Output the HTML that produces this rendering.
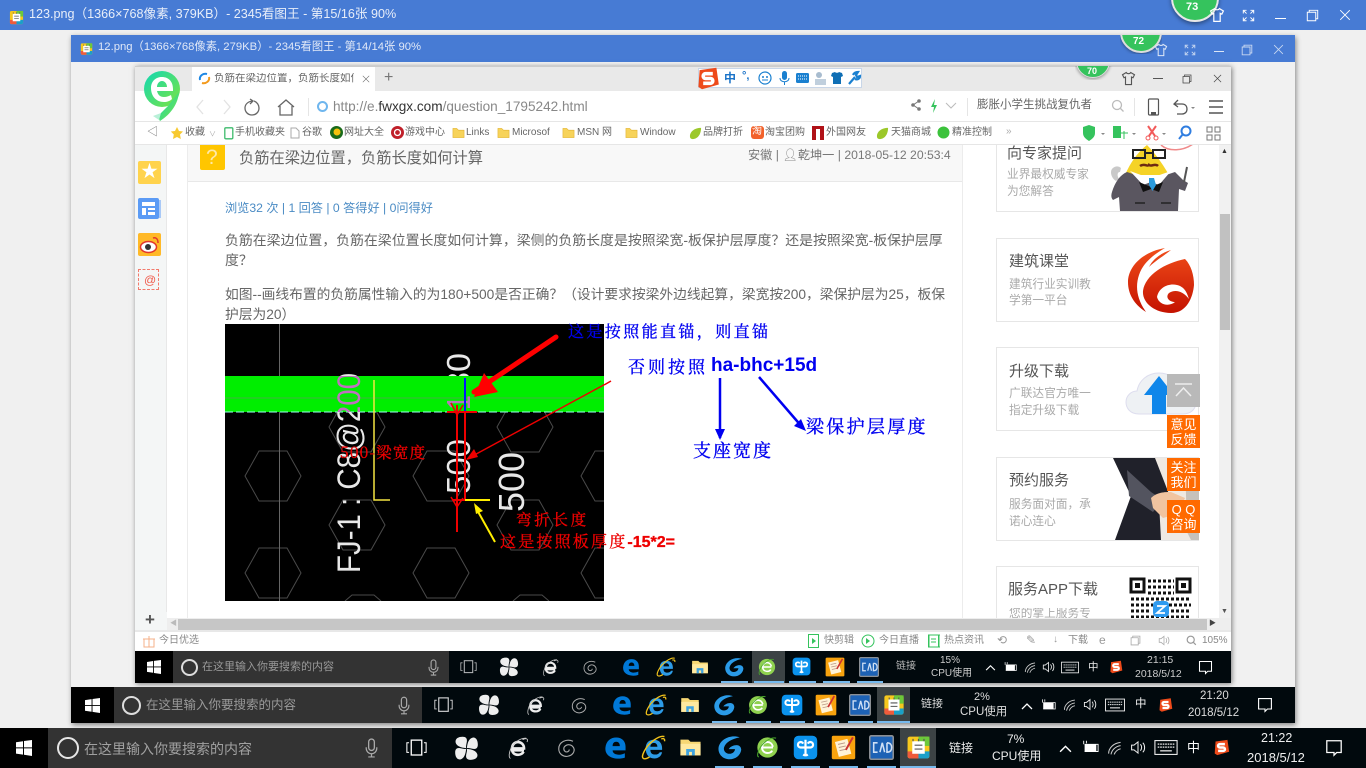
<!DOCTYPE html>
<html lang="zh-CN"><head><meta charset="utf-8"><title>123.png</title>
<style>
html,body{margin:0;padding:0;width:1366px;height:768px;overflow:hidden;background:#f0f0f0}
body{position:relative;font-family:"Liberation Sans","Noto Sans CJK SC",sans-serif;color:#666;filter:blur(.3px)}
div,span,svg{position:absolute}
.t{white-space:nowrap;line-height:1}
.bar{background:#477bd4}
.tb{background:#01090d;overflow:hidden}
.ic{width:28px;height:28px}
.card{position:absolute;left:996px;width:203px;border:1px solid #e6e6e6;background:#fff;box-sizing:border-box}
.side{left:1167px;width:33px;background:#ff6a00;color:#fff;text-align:center;font-size:13px;line-height:15px;height:33px;padding-top:2px;box-sizing:border-box}
.h{font-size:15px;color:#555}
.g{font-size:11.700px;color:#aaa}
.bm{font-size:10px;color:#666;top:128px}
.st{font-size:10px;color:#888;top:636px}
.b{color:#0000f0;font-family:"Noto Serif CJK SC","Liberation Serif",serif;font-weight:400;-webkit-text-stroke:.35px currentColor}
</style></head><body>

<svg width="0" height="0" style="left:0;top:0">
<defs>
<symbol id="win" viewBox="0 0 16 16"><path fill="#fff" d="M0 2.300 7 1.200V7.400H0ZM8 1 16 0V7.400H8ZM0 8.400H7V14.600L0 13.600ZM8 8.400H16V16L8 14.800Z"/></symbol>
<symbol id="mic" viewBox="0 0 16 24"><rect x="4.500" y="1" width="7" height="14" rx="3.500" fill="none" stroke="#aaa" stroke-width="1.600"/><path d="M1.500 11v1.500a6.500 6.500 0 0 0 13 0V11M8 19v4M4 23h8" fill="none" stroke="#aaa" stroke-width="1.500"/></symbol>
<symbol id="tv" viewBox="0 0 24 20"><rect x="6" y="1" width="12" height="17" fill="none" stroke="#fff" stroke-width="1.500"/><path d="M3.500 4H1v11h2.500M20.500 4H23v11h-2.500" fill="none" stroke="#fff" stroke-width="1.200"/></symbol>
<symbol id="pin" viewBox="0 0 32 32"><g fill="#eee"><path id="bl1" d="M15.500 15.500C9 15 3 13 2 8 1.500 3 6 1 11 1c4 0 6 2 5.500 6-.5 3-1.500 6-1 8.500Z"/><path d="M16.500 15.500C17 9 19 3 24 2c4.500-.5 6.500 4 6.500 9 0 4-2 6-6 5.500-3-.5-5.500-1.500-8-1Z"/><path d="M16.500 16.500C23 17 29 19 30 24c.5 4.500-4 6.500-9 6.500-4 0-6-2-5.500-6 .5-3 1.500-5.500 1-8Z"/><path d="M15.500 16.500C15 23 13 29 8 30c-4.500.5-6.500-4-6.500-9 0-4 2-6 6-5.500 3 .5 5.500 1.500 8 1Z"/></g></symbol>
<symbol id="iew" viewBox="0 0 32 32"><path fill="none" stroke="#eee" stroke-width="3.500" d="M24 19H9.500M9 16.500H24C24 11 20 8 16 8 11 8 8 12 8 17c0 5 3 8 8 8 3.500 0 6-1.500 7.500-4"/><path fill="none" stroke="#ccc" stroke-width="1.200" d="M27 3C20 2 8 9 5 21c-1 4-1 8 1 9M22 5c5-3 8-1 6 3"/></symbol>
<symbol id="spi" viewBox="0 0 32 32"><path fill="none" stroke="#aaa" stroke-width="1.500" d="M24 7C15 3 5 8 5 17c0 7 6 11 12 10 6-1 10-6 8-11-2-4-7-6-11-3-3 2-3 6 0 8 3 1 5-1 5-3"/></symbol>
<symbol id="edge" viewBox="0 0 32 32"><path fill="#0078d7" d="M2 16C3 7 9 2 17 2c8 0 13 5 13 13v5H12c0 4 4 6 9 6 3 0 6-1 8-2v6c-3 1-6 1.500-9 1.500C9 31.500 1 26 2 16Zm10-2h10c0-4-2-6-5-6s-5 2-5 6Z"/></symbol>
<symbol id="ie" viewBox="0 0 32 32"><path fill="#2d9be6" d="M6 17C6 10 10 6 16.500 6 23 6 27 10 27 17v2H12c0 4 2 6 6 6 3 0 5-1 6-3h3c-1 5-5 8-10 8-7 0-11-5-11-13Zm6-2h9c0-3-2-5-4.500-5S12 12 12 15Z"/><path fill="none" stroke="#f2c21a" stroke-width="1.800" d="M30 2C24 0 10 9 4 21c-2 4-3 8-1 9 2 1 5 0 8-2M26 5c3-1 5 0 4 3"/></symbol>
<symbol id="fold" viewBox="0 0 32 32"><path fill="#f7d774" d="M2 5h11l3 3h14v19H2Z"/><path fill="#ffe9a0" d="M2 11h28v16H2Z"/><path fill="#3fa3e0" d="M10 27v-9h12v9h-4v-5h-4v5Z"/></symbol>
<symbol id="g" viewBox="0 0 32 32"><path fill="#2a9be8" d="M29 3C18-1 4 5 2 16c-1 8 5 15 14 15 8 0 14-5 15-12 0-3-2-6-6-6-4 0-8 2-10 5h8c0 3-3 6-7 6-5 0-8-4-7-8 2-7 10-11 20-13Z"/></symbol>
<symbol id="ge" viewBox="0 0 32 32"><circle cx="16" cy="16" r="13" fill="#8fd14f"/><path fill="none" stroke="#fff" stroke-width="2.500" d="M9 16h14M23 15c-1-4-4-6-7-6-4 0-7 3-7 7s3 7 7 7c3 0 5-1 6-3"/><path fill="none" stroke="#4aa82c" stroke-width="1.300" d="M27 4C20 2 8 10 4 22c-1 3-1 6 1 6"/></symbol>
<symbol id="bl" viewBox="0 0 32 32"><rect x="1" y="1" width="30" height="30" rx="6" fill="#0b93ee"/><path fill="none" stroke="#fff" stroke-width="2.800" d="M16 6v20M16 16H10a3.500 3.500 0 1 1 3-5M16 16h6a3.500 3.500 0 1 0-3-5M13 25c1.500 1 3 1 3 1s1.500 0 3-1"/></symbol>
<symbol id="no" viewBox="0 0 32 32"><rect x="1" y="1" width="30" height="30" rx="2" fill="#f8a30e"/><path fill="#fff3d8" d="M5 9 21 5 26 24 10 28Z"/><path stroke="#b98" stroke-width="1.200" d="M9 12l9-2M10 16l9-2M11 20l9-2"/><path stroke="#c33" stroke-width="2.500" d="M28 3 19 19"/></symbol>
<symbol id="cad" viewBox="0 0 32 32"><rect x="1" y="1" width="30" height="30" rx="2" fill="#1d62b5" stroke="#8b8f94" stroke-width="2"/><path fill="none" stroke="#cfe0f5" stroke-width="2" d="M11 10H6v12h5M14 22l3-12 3 12M23 10v12c5 0 6-3 6-6s-1-6-6-6"/></symbol>
<symbol id="kw" viewBox="0 0 32 32"><rect x="2" y="2" width="28" height="28" rx="3" fill="#f6c81d"/><path fill="#6cc93a" d="M16 2h14v12H16Z"/><path fill="#ef5b3c" d="M2 21h14v9H5a3 3 0 0 1-3-3Z"/><path fill="#1aa0c8" d="M16 21h14v6a3 3 0 0 1-3 3H16Z"/><rect x="8" y="8" width="16" height="16" fill="#fff"/><path stroke="#555" stroke-width="1.500" fill="none" d="M9 8V5M16 8V5M23 8V5M11 13h10M11 18h10"/></symbol>
<symbol id="s" viewBox="0 0 20 20"><path fill="#ee4a1a" d="M3 3 17 1l2 14-14 4L2 17Z"/><path fill="none" stroke="#fff" stroke-width="3" d="M14 6H8a2 2 0 0 0 0 4h4a2 2 0 0 1 0 4H6"/></symbol>
<symbol id="up" viewBox="0 0 12 8"><path fill="none" stroke="#fff" stroke-width="1.300" d="M1 7 6 2l5 5"/></symbol>
<symbol id="bat" viewBox="0 0 20 16"><path fill="#fff" d="M4 5h13v8H4Z"/><path fill="none" stroke="#fff" d="M4 5h15v8H4M3 1v4M6 1v3"/></symbol>
<symbol id="wf" viewBox="0 0 20 18"><path fill="none" stroke="#ccc" stroke-width="1.300" d="M2 16c0-7 6-13 15-14M5 17c1-5 5-10 12-11M9 17c1-3 4-6 8-7"/></symbol>
<symbol id="vol" viewBox="0 0 20 18"><path fill="none" stroke="#eee" stroke-width="1.300" d="M2 6h3l5-4v14l-5-4H2ZM13 5c2 2 2 6 0 8M16 3c3 3 3 9 0 12"/></symbol>
<symbol id="kb" viewBox="0 0 28 18"><rect x=".7" y=".7" width="26.600" height="16.600" fill="none" stroke="#eee" stroke-width="1.300"/><path stroke="#eee" stroke-dasharray="2 1" stroke-width="1.500" d="M4 5h20M4 8.500h20"/><path stroke="#eee" stroke-width="1.500" d="M7 13h14"/></symbol>
<symbol id="nf" viewBox="0 0 20 20"><path fill="none" stroke="#fff" stroke-width="1.400" d="M2 2h16v13h-5l-3 3v-3H2Z"/></symbol>
<symbol id="shirt" viewBox="0 0 20 20"><path fill="none" stroke="currentColor" stroke-width="1.500" d="M7 2 2 5l2 4 2-1v10h8V8l2 1 2-4-5-3c-1 2-5 2-6 0Z"/></symbol>
<symbol id="fs" viewBox="0 0 20 20"><path fill="none" stroke="currentColor" stroke-width="1.500" d="M2 7V2h5M13 2h5v5M18 13v5h-5M7 18H2v-5M3 3l4 4M17 3l-4 4M17 17l-4-4M3 17l4-4"/></symbol>
<symbol id="rs" viewBox="0 0 20 20"><path fill="none" stroke="currentColor" stroke-width="1.500" d="M2 5h13v13H2ZM5 5V2h13v13h-3"/></symbol>
<symbol id="x" viewBox="0 0 20 20"><path fill="none" stroke="currentColor" stroke-width="1.500" d="M2 2l16 16M18 2 2 18"/></symbol>
<symbol id="fld" viewBox="0 0 14 12"><path fill="#f7d35a" stroke="#e0b030" stroke-width=".6" d="M1 1h4l2 2h6v8H1Z"/></symbol>
<symbol id="leaf" viewBox="0 0 14 14"><path fill="#9cc82a" d="M13 1C6 1 1 5 1 10c0 2 1 3 3 3 6 0 9-6 9-12Z"/></symbol>
<clipPath id="gr"><rect x="225" y="376" width="379" height="36"/></clipPath>
<clipPath id="ngr"><path d="M225 324H604V376H225ZM225 412H604V601H225Z"/></clipPath>
<linearGradient id="r" x1="0" y1="0" x2="0" y2="1"><stop offset="0" stop-color="#f04d1a"/><stop offset="1" stop-color="#c41200"/></linearGradient>
<linearGradient id="lg" x1="0" y1="0" x2="1" y2="1"><stop offset="0" stop-color="#10d8b4"/><stop offset="1" stop-color="#7fe43e"/></linearGradient>
</defs></svg>

<!-- window 1 title -->
<div class="bar" style="left:0;top:0;width:1366px;height:30px"></div>
<svg style="left:9px;top:8px" width="15" height="19"><use href="#kw" width="15" height="19"/></svg>
<span class="t" style="left:29px;top:8px;font-size:12.600px;color:#e8eef9">123.png（1366×768像素, 379KB）- 2345看图王 - 第15/16张 90%</span>
<div style="left:1171px;top:-26px;width:44px;height:44px;border-radius:50%;background:#35c35d;border:2px solid #e8e8e8;box-shadow:0 2px 4px rgba(0,0,0,.4)"></div>
<span class="t" style="left:1186px;top:2px;font-size:11px;font-weight:700;color:#fff">73</span>
<svg style="left:1209px;top:7px;color:#fff" width="16" height="16"><use href="#shirt" width="16" height="16"/></svg>
<svg style="left:1242px;top:9px;color:#fff" width="13" height="13"><use href="#fs" width="13" height="13"/></svg>
<div style="left:1275px;top:18px;width:11px;height:1px;background:#fff"></div>
<svg style="left:1306px;top:9px;color:#fff" width="13" height="13"><use href="#rs" width="13" height="13"/></svg>
<svg style="left:1339px;top:9px;color:#fff" width="12" height="12"><use href="#x" width="12" height="12"/></svg>

<!-- window 2 -->
<div style="left:71px;top:35px;width:1224px;height:688px;background:#f1f1f1;box-shadow:1px 2px 5px rgba(0,0,0,.45)"></div>
<div class="bar" style="left:71px;top:35px;width:1224px;height:27px"></div>
<svg style="left:80px;top:41px" width="13" height="16"><use href="#kw" width="13" height="16"/></svg>
<span class="t" style="left:98px;top:42px;font-size:11.300px;color:#e0e8f7">12.png（1366×768像素, 279KB）- 2345看图王 - 第14/14张 90%</span>
<div style="left:1120px;top:35px;width:42px;height:19px;overflow:hidden"><div style="left:0;top:-24px;width:38px;height:38px;border-radius:50%;background:#35c35d;border:2px solid #ddd;box-shadow:0 1px 3px rgba(0,0,0,.4)"></div></div>
<span class="t" style="left:1133px;top:37px;font-size:10px;font-weight:700;color:#fff">72</span>
<svg style="left:1154px;top:43px;color:#dce6f6" width="14" height="14"><use href="#shirt" width="14" height="14"/></svg>
<svg style="left:1184px;top:44px;color:#c9d8f1" width="12" height="12"><use href="#fs" width="12" height="12"/></svg>
<div style="left:1214px;top:51px;width:10px;height:1px;background:#dce6f6"></div>
<svg style="left:1241px;top:44px;color:#c9d8f1" width="12" height="12"><use href="#rs" width="12" height="12"/></svg>
<svg style="left:1273px;top:44px;color:#c9d8f1" width="11" height="11"><use href="#x" width="11" height="11"/></svg>

<!-- browser -->
<div style="left:135px;top:66px;width:1096px;height:617px;background:#fff;box-shadow:1px 1px 5px rgba(0,0,0,.5)"></div>
<div style="left:135px;top:66px;width:1096px;height:25px;background:#e9e9e9;border-top:1px solid #ccc;box-sizing:border-box"></div>
<div style="left:192px;top:67px;width:183px;height:24px;background:#fff"></div>
<svg style="left:143px;top:70px" width="38" height="52" viewBox="0 0 38 52"><circle cx="19" cy="19" r="18" fill="url(#lg)"/><path fill="url(#lg)" d="M36 22c-1 12-8 22-19 29 0 0-2-3-1-6l9-9Z"/><path fill="#fff" d="M8 18c0-7 5-11 11-11s11 4 11 12v2H14c1 4 3 6 7 6 3 0 5-1 7-2l1 4c-2 2-5 3-8 3-8 0-13-6-13-14Zm6-1h10c0-3-2-6-5-6s-5 3-5 6Z"/><path fill="#b9f0d8" d="M10 46l8-3-2 7Z"/></svg>
<svg style="left:198px;top:72px" width="13" height="13" viewBox="0 0 13 13"><path fill="none" stroke="#1e88e5" stroke-width="2" d="M2 8C1 4 5 1 9 2"/><path fill="none" stroke="#f39a1d" stroke-width="2" d="M11 5c1 4-3 7-7 6"/></svg>
<span class="t" style="left:214px;top:73px;font-size:10.500px;color:#666;width:140px;overflow:hidden">负筋在梁边位置，负筋长度如何计算</span>
<svg style="left:362px;top:75px;color:#666" width="8" height="8"><use href="#x" width="8" height="8"/></svg>
<span class="t" style="left:384px;top:70px;font-size:16px;color:#777;font-weight:400">+</span>

<!-- sogou IME -->
<div style="left:698px;top:68px;width:164px;height:20px;border:1px solid #c8d6e8;background:#fff;box-sizing:border-box"></div>
<svg style="left:696px;top:66px" width="24" height="25"><use href="#s" width="24" height="25"/></svg>
<span class="t" style="left:724px;top:72px;font-size:12px;font-weight:700;color:#1a73c8">中</span>
<span class="t" style="left:742px;top:71px;font-size:11px;font-weight:700;color:#1a73c8">°,</span>
<svg style="left:758px;top:70px" width="108" height="16" viewBox="0 0 108 16"><circle cx="7" cy="8" r="6" fill="none" stroke="#1a80d0" stroke-width="1.200"/><circle cx="5" cy="7" r="1" fill="#1a80d0"/><circle cx="9" cy="7" r="1" fill="#1a80d0"/><path d="M4 10h6" stroke="#1a80d0"/><rect x="24" y="1" width="5" height="9" rx="2.500" fill="#1a80d0"/><path d="M22 8c0 5 9 5 9 0M26.500 12v3" stroke="#1a80d0" fill="none"/><rect x="38" y="3" width="13" height="10" rx="1.500" fill="#1a80d0"/><path d="M40 6h9M40 9h9" stroke="#fff" stroke-dasharray="1 1"/><circle cx="61" cy="5" r="3" fill="#a8bccf"/><rect x="57" y="9" width="11" height="6" fill="#c0cfdd"/><path fill="#0f6fb5" d="M74 3l3-1c1 1 3 1 4 0l3 1 1 3-2 1v7h-8V7l-2-1Z"/><path fill="none" stroke="#1a80d0" stroke-width="2.200" d="M91 14l6-7M95 5c1-2 3-3 5-3l-2 3 1 2 3-1c0 3-3 4-5 3"/></svg>

<div style="left:1075px;top:66px;width:38px;height:14px;overflow:hidden"><div style="left:1px;top:-22px;width:32px;height:32px;border-radius:50%;background:#35c35d;border:1px solid #ddd;box-shadow:0 1px 3px rgba(0,0,0,.4)"></div></div>
<span class="t" style="left:1087px;top:67px;font-size:9px;font-weight:700;color:#fff">70</span>
<svg style="left:1121px;top:71px;color:#555" width="15" height="15"><use href="#shirt" width="15" height="15"/></svg>
<div style="left:1153px;top:78px;width:10px;height:1px;background:#555"></div>
<svg style="left:1182px;top:74px;color:#444" width="10" height="10"><use href="#rs" width="10" height="10"/></svg>
<svg style="left:1213px;top:74px;color:#444" width="9" height="9"><use href="#x" width="9" height="9"/></svg>

<!-- address bar -->
<svg style="left:192px;top:97px" width="110" height="20" viewBox="0 0 110 20"><path fill="none" stroke="#e2e2e2" stroke-width="1.300" d="M11 3 5 10l6 7M32 3l6 7-6 7"/><path fill="none" stroke="#666" stroke-width="1.300" d="M60 4c-5 1-7 4-7 7 0 4 3 7 7 7s7-3 7-7c0-3-2-6-5-7M58 2l3 2-3 3"/><path fill="none" stroke="#666" stroke-width="1.300" d="M86 10l8-7 8 7M88 9v9h12V9"/></svg>
<div style="left:308px;top:98px;width:1px;height:18px;background:#e5e5e5"></div>
<svg style="left:316px;top:100px" width="13" height="13" viewBox="0 0 13 13"><circle cx="6.500" cy="6.500" r="4.500" fill="none" stroke="#6fb6ee" stroke-width="2"/></svg>
<span class="t" style="left:333px;top:100px;font-size:13.600px;color:#888">http://e.<span style="position:static;color:#333">fwxgx.com</span>/question_1795242.html</span>
<svg style="left:910px;top:98px" width="30" height="16" viewBox="0 0 30 16"><path fill="none" stroke="#777" d="M9 3 3 7l6 4"/><circle cx="9" cy="3" r="1.800" fill="#777"/><circle cx="3" cy="7" r="1.800" fill="#777"/><circle cx="9" cy="11" r="1.800" fill="#777"/><path fill="#35c35d" d="M25 1l-4 8h3l-1 6 4-8h-3Z"/></svg>
<svg style="left:945px;top:102px" width="12" height="8" viewBox="0 0 12 8"><path fill="none" stroke="#bbb" d="M1 1l5 5 5-5"/></svg>
<div style="left:967px;top:98px;width:1px;height:18px;background:#e5e5e5"></div>
<span class="t" style="left:977px;top:100px;font-size:11.500px;color:#666">膨胀小学生挑战复仇者</span>
<svg style="left:1111px;top:99px" width="14" height="14" viewBox="0 0 14 14"><circle cx="6" cy="6" r="4.500" fill="none" stroke="#bbb" stroke-width="1.300"/><path d="M9.500 9.500l3 3" stroke="#bbb" stroke-width="1.300"/></svg>
<div style="left:1134px;top:98px;width:1px;height:18px;background:#e5e5e5"></div>
<svg style="left:1147px;top:97px" width="78" height="20" viewBox="0 0 78 20"><rect x="1.500" y="2" width="10" height="16" rx="1" fill="none" stroke="#555" stroke-width="1.200"/><rect x="4" y="15" width="5" height="2.500" fill="#555"/><path fill="none" stroke="#555" stroke-width="1.300" d="M28 7h7c4 0 5 3 5 5 0 3-2 5-5 5h-5M31 3l-4 4 4 3"/><path fill="#888" d="M44 10h4l-2 2Z"/><path stroke="#555" stroke-width="1.400" d="M62 4h14M62 10h14M62 16h14"/></svg>

<!-- bookmarks -->
<div style="left:135px;top:121px;width:1096px;height:24px;background:#fff;border-top:1px solid #e6e6e6;border-bottom:1px solid #e6e6e6;box-sizing:border-box"></div>
<span class="t" style="left:147px;top:127px;font-size:11px;color:#777">◁</span>
<svg style="left:170px;top:126px" width="14" height="14" viewBox="0 0 14 14"><path fill="#f7c930" d="M7 1l2 4 4 .5-3 3 .8 4.500L7 11l-4 2 .8-4.500-3-3L5 5Z"/></svg>
<span class="t bm" style="left:185px">收藏</span>
<span class="t" style="left:209px;top:131px;font-size:7px;color:#aaa">∨</span>
<svg style="left:224px;top:127px" width="10" height="13"><rect x=".8" y=".8" width="8" height="11" rx="1" fill="none" stroke="#3dbb6c" stroke-width="1.300"/></svg>
<span class="t bm" style="left:235px">手机收藏夹</span>
<svg style="left:290px;top:127px" width="10" height="12"><path fill="none" stroke="#aaa" d="M1 1h5l3 3v7H1Z"/></svg>
<span class="t bm" style="left:302px">谷歌</span>
<svg style="left:330px;top:126px" width="13" height="13"><circle cx="6.500" cy="6.500" r="6.500" fill="#1a6b1a"/><circle cx="7" cy="6" r="3.500" fill="#f4c20d"/></svg>
<span class="t bm" style="left:344px">网址大全</span>
<svg style="left:391px;top:126px" width="13" height="13"><circle cx="6.500" cy="6.500" r="6.500" fill="#c0202a"/><circle cx="6.500" cy="6.500" r="3" fill="none" stroke="#fff" stroke-width="1.300"/></svg>
<span class="t bm" style="left:405px">游戏中心</span>
<svg style="left:452px;top:127px" width="13" height="12"><use href="#fld" width="13" height="12"/></svg>
<span class="t bm" style="left:466px">Links</span>
<svg style="left:497px;top:127px" width="13" height="12"><use href="#fld" width="13" height="12"/></svg>
<span class="t bm" style="left:512px">Microsof</span>
<svg style="left:562px;top:127px" width="13" height="12"><use href="#fld" width="13" height="12"/></svg>
<span class="t bm" style="left:577px">MSN 网</span>
<svg style="left:625px;top:127px" width="13" height="12"><use href="#fld" width="13" height="12"/></svg>
<span class="t bm" style="left:640px">Window</span>
<svg style="left:689px;top:127px" width="13" height="13"><use href="#leaf" width="13" height="13"/></svg>
<span class="t bm" style="left:703px">品牌打折</span>
<div style="left:751px;top:126px;width:13px;height:13px;background:#f2612a;border-radius:3px"></div>
<span class="t" style="left:752px;top:127px;font-size:10px;color:#fff">淘</span>
<span class="t bm" style="left:765px">淘宝团购</span>
<svg style="left:812px;top:126px" width="12" height="14"><path fill="#b01218" d="M0 0h12v14H8V3H4v11H0Z"/></svg>
<span class="t bm" style="left:826px">外国网友</span>
<svg style="left:876px;top:127px" width="13" height="13"><use href="#leaf" width="13" height="13"/></svg>
<span class="t bm" style="left:891px">天猫商城</span>
<svg style="left:937px;top:126px" width="13" height="13"><circle cx="6.500" cy="6.500" r="6" fill="#3cc23c"/></svg>
<span class="t bm" style="left:952px">精准控制</span>
<span class="t" style="left:1006px;top:127px;font-size:10px;color:#aaa">»</span>
<svg style="left:1082px;top:125px" width="142" height="16" viewBox="0 0 142 16"><path fill="#35c35d" d="M1 2l6-2 6 2v6c0 4-3 6-6 8-3-2-6-4-6-8Z"/><path fill="#888" d="M19 8h4l-2 2Z"/><rect x="31" y="1" width="8" height="12" fill="#35c35d"/><path stroke="#35c35d" d="M39 8h7M42 6v8"/><path fill="#888" d="M50 8h4l-2 2Z"/><path stroke="#f25a5a" stroke-width="2" fill="none" d="M66 1l7 10M74 1l-7 10"/><circle cx="66" cy="13" r="2" fill="none" stroke="#f25a5a"/><circle cx="74" cy="13" r="2" fill="none" stroke="#f25a5a"/><path fill="#888" d="M80 8h4l-2 2Z"/><circle cx="104" cy="6" r="4.500" fill="none" stroke="#2f7de0" stroke-width="2"/><path stroke="#2f7de0" stroke-width="2" d="M101 9l-4 5"/><path fill="none" stroke="#777" d="M125 2h5v5h-5ZM133 2h5v5h-5ZM125 10h5v5h-5ZM133 10h5v5h-5Z"/></svg>

<!-- left rail -->
<div style="left:135px;top:145px;width:32px;height:473px;background:#f4f6f6;border-right:1px solid #e8e8e8;box-sizing:border-box"></div>
<div style="left:138px;top:161px;width:23px;height:23px;background:#ffd34d;border-radius:2px"></div>
<span class="t" style="left:141px;top:163px;font-size:17px;color:#fff">★</span>
<svg style="left:138px;top:198px" width="23" height="22" viewBox="0 0 23 22"><rect width="21" height="21" rx="2" fill="#5b9bf5"/><rect x="21" y="2" width="2" height="18" fill="#a9c9f7"/><path fill="#fff" d="M4 4h13v4H4ZM4 10h4v7H4ZM10 10h7v2H10ZM10 14h7v3H10Z"/></svg>
<svg style="left:138px;top:233px" width="23" height="23" viewBox="0 0 23 23"><rect width="23" height="23" rx="2" fill="#ffb928"/><ellipse cx="10.500" cy="14" rx="8" ry="5.500" fill="#fff" stroke="#e3362d" stroke-width="1.500"/><circle cx="10" cy="14" r="3" fill="#333"/><path fill="none" stroke="#e3362d" stroke-width="1.500" d="M15 5c3-1 5 1 5 5"/></svg>
<div style="left:138px;top:269px;width:21px;height:21px;border:1px dashed #f27a6c;box-sizing:border-box"></div>
<span class="t" style="left:144px;top:274px;font-size:12px;color:#f0594a">@</span>

<!-- article -->
<div style="left:187px;top:145px;width:776px;height:473px;border-left:1px solid #ececec;border-right:1px solid #ececec;box-sizing:border-box"></div>
<div style="left:188px;top:145px;width:774px;height:37px;background:#f8f8f8;border-bottom:1px solid #e8e8e8;box-sizing:border-box"></div>
<div style="left:200px;top:145px;width:25px;height:25px;background:#ffc600;border-radius:0 0 2px 2px"></div>
<span class="t" style="left:206px;top:147px;font-size:21px;color:#ffe9a8">?</span>
<span class="t" style="left:239px;top:151px;font-size:15.250px;color:#666">负筋在梁边位置，负筋长度如何计算</span>
<span class="t" style="left:748px;top:149px;font-size:12.200px;color:#777">安徽 | <span style="position:static;color:#888">👤︎</span>乾坤一 | 2018-05-12 20:53:4</span>
<span class="t" style="left:225px;top:202px;font-size:12.200px;color:#4a8bc4">浏览32 次 | 1 回答 | 0 答得好 | 0问得好</span>
<span class="t" style="left:225px;top:234px;font-size:13.900px;color:#666">负筋在梁边位置，负筋在梁位置长度如何计算，梁侧的负筋长度是按照梁宽-板保护层厚度？还是按照梁宽-板保护层厚</span>
<span class="t" style="left:225px;top:254px;font-size:13.900px;color:#666">度？</span>
<span class="t" style="left:225px;top:288px;font-size:13.750px;color:#666">如图--画线布置的负筋属性输入的为180+500是否正确？（设计要求按梁外边线起算，梁宽按200，梁保护层为25，板保</span>
<span class="t" style="left:225px;top:308px;font-size:13.750px;color:#666">护层为20）</span>

<!-- CAD figure -->
<svg style="left:225px;top:324px" width="379" height="277" viewBox="225 324 379 277" font-family="'Liberation Sans', sans-serif">
<rect x="225" y="324" width="379" height="277" fill="#000"/>
<g fill="none" stroke="#4a4a4a" stroke-width="1"><path d="M245 476l14-25h28l14 25-14 25h-28ZM413 476l14-25h28l14 25-14 25h-28ZM581 476l14-25h28l14 25-14 25h-28ZM245 573l14-25h28l14 25-14 25h-28ZM413 573l14-25h28l14 25-14 25h-28ZM581 573l14-25h28l14 25-14 25h-28ZM329 427l14-25h28l14 25-14 25h-28ZM497 427l14-25h28l14 25-14 25h-28ZM329 525l14-25h28l14 25-14 25h-28ZM497 525l14-25h28l14 25-14 25h-28ZM345 601l7-6h22l7 6M513 601l7-6h22l7 6"/></g>
<path d="M279.500 324V601" stroke="#666"/>
<rect x="225" y="376" width="379" height="36" fill="#00ee00"/>
<path d="M225 398H604" stroke="#44b044"/>
<path d="M225 412H604" stroke="#9fe" stroke-dasharray="8 3"/>
<g clip-path="url(#ngr)"><text transform="translate(360,573) rotate(-90)" font-size="32" fill="#e8e8e8" textLength="200" lengthAdjust="spacingAndGlyphs">FJ-1 : C8@200</text></g>
<g clip-path="url(#gr)"><text transform="translate(360,573) rotate(-90)" font-size="32" fill="#c070c0" textLength="200" lengthAdjust="spacingAndGlyphs">FJ-1 : C8@200</text></g>
<g clip-path="url(#ngr)"><text transform="translate(470,410) rotate(-90)" font-size="33" fill="#e8e8e8" textLength="57" lengthAdjust="spacingAndGlyphs">180</text></g>
<text transform="translate(470,410) rotate(-90)" font-size="33" fill="#b57ab5" textLength="15" lengthAdjust="spacingAndGlyphs">1</text>
<text transform="translate(470,494) rotate(-90)" font-size="33" fill="#e8e8e8" textLength="55" lengthAdjust="spacingAndGlyphs">500</text>
<text transform="translate(524,512) rotate(-90)" font-size="36" fill="#e8e8e8" textLength="60" lengthAdjust="spacingAndGlyphs">500</text>
<path d="M374 380V500H390" fill="none" stroke="#f5e642" stroke-width="1.500"/>
<path d="M465 378V412" stroke="#0018ff" stroke-width="2"/>
<path d="M447 412H477" stroke="#ee0000" stroke-width="2"/>
<path d="M457 405V532M465 412V500M453 500h12" fill="none" stroke="#ee0000" stroke-width="2"/>
<path d="M451 403l6 12 6-10M451 497l6 10 6-9" fill="none" stroke="#ee0000" stroke-width="1.500"/>
<path d="M465 500H490" stroke="#ffee00" stroke-width="2"/>
<path d="M556 337 474 392" stroke="#ff0000" stroke-width="5" stroke-linecap="round"/>
<path d="M474 397l10-24 14 19Z" fill="#ff0000"/>
<path d="M611 381 467 459" stroke="#ee0000" stroke-width="1.500"/>
<path d="M466 460l12-3-4-8Z" fill="#ee0000"/>
<path d="M495 542 476 508" stroke="#ffee00" stroke-width="2"/>
<path d="M474 503l9 8-7 3Z" fill="#ffee00"/>
</svg>
<svg style="left:600px;top:375px" width="210" height="70" viewBox="600 375 210 70">
<path d="M611 381 604 385" stroke="#ee0000" stroke-width="1.500"/>
<path d="M720 378V438" stroke="#0000f0" stroke-width="2.500"/><path d="M720 440l-5-11h10Z" fill="#0000f0"/>
<path d="M759 377 803 428" stroke="#0000f0" stroke-width="2.500"/><path d="M806 431l-12-5 7-7Z" fill="#0000f0"/>
</svg>
<span class="t b" style="left:568px;top:323px;font-size:16px;letter-spacing:2.400px">这是按照能直锚，则直锚</span>
<span class="t b" style="left:628px;top:357px;font-size:17px;letter-spacing:3px">否则按照</span>
<span class="t" style="left:711px;top:356px;font-size:19px;font-weight:700;color:#0000f0">ha-bhc+15d</span>
<span class="t b" style="left:806px;top:417px;font-size:18px;letter-spacing:2.300px">梁保护层厚度</span>
<span class="t b" style="left:693px;top:441px;font-size:18px;letter-spacing:2px">支座宽度</span>
<span class="t b" style="left:340px;top:445px;font-size:15.500px;color:#ee0000;letter-spacing:1.200px">500-梁宽度</span>
<span class="t b" style="left:516px;top:512px;font-size:15.500px;color:#ee0000;letter-spacing:2.700px">弯折长度</span>
<span class="t b" style="left:500px;top:533px;font-size:16px;color:#ee0000;letter-spacing:2.200px">这是按照板厚度<span style="position:static;font-family:'Liberation Sans',sans-serif;font-weight:700;letter-spacing:0">-15*2=</span></span>

<!-- right column -->
<div class="card" style="top:145px;height:67px;border-top:0"></div>
<span class="t h" style="left:1007px;top:146px">向专家提问</span>
<span class="t g" style="left:1007px;top:169px">业界最权威专家</span>
<span class="t g" style="left:1007px;top:186px">为您解答</span>
<svg style="left:1105px;top:145px" width="95" height="66" viewBox="0 0 95 66"><path fill="none" stroke="#f08a8a" stroke-width="1.500" d="M56 0c8 7 22 6 32-1"/><path fill="#c9c9c9" d="M6 27a6 6 0 0 1 10-4l-1 4c-3 0-3 4-1 7l-3 2c-3-2-5-5-5-9Z"/><path fill="#f5d327" d="M42 0c6 6 14 16 22 30H20C26 16 34 6 42 0Z"/><path fill="#5a5660" d="M22 27l24 8 24-8 8 8 5 3-3 8-6-2-1 22H15l-1-14-6 3c-2-2-2-5-1-8 3-10 8-17 15-20Z"/><path fill="#fff" d="M25 26l19 7 2 0 20-7-12 14-8-3-8 3Z"/><path fill="#111" d="M34 37l12 5 12-5-4 10-8-3-8 3Z"/><path fill="#2a9bdc" d="M44 33h5l2 7-3.500 6-3.500-6Z"/><rect x="28" y="5" width="12" height="8" fill="none" stroke="#222" stroke-width="2"/><rect x="48" y="5" width="12" height="8" fill="none" stroke="#222" stroke-width="2"/><path d="M40 8h8" stroke="#222" stroke-width="2"/><path d="M35 21c4-3 8 1 9-1 2 2 6-2 9 1" fill="none" stroke="#6e2a12" stroke-width="2.500"/><path stroke="#555" stroke-width="2" d="M82 22l-3 15"/><path stroke="#222" stroke-width="1.500" d="M30 58h10M56 58h10"/></svg>

<div class="card" style="top:238px;height:84px"></div>
<span class="t h" style="left:1009px;top:254px">建筑课堂</span>
<span class="t g" style="left:1009px;top:279px">建筑行业实训教</span>
<span class="t g" style="left:1009px;top:295px">学第一平台</span>
<svg style="left:1127px;top:247px" width="70" height="68" viewBox="0 0 70 68"><path fill="url(#r)" d="M38 1C15 5 1 20 1 35 1 48 8 58 19 65 10 52 8 40 12 28 16 16 26 8 38 1ZM44 3C34 6 26 12 22 20 28 14 38 8 44 3ZM58 12C38 16 18 28 16 44c-1 12 12 22 28 22 16 0 22-16 23-28 0-10-3-20-9-26Z"/><path fill="#fff" d="M30 50c2-10 12-14 20-12 8 2 10 8 12 14-6-8-14-10-20-6-4 4 0 9 6 9-6 5-16 3-18-5Z"/></svg>

<div class="card" style="top:347px;height:84px"></div>
<span class="t h" style="left:1009px;top:364px">升级下载</span>
<span class="t g" style="left:1009px;top:388px">广联达官方唯一</span>
<span class="t g" style="left:1009px;top:405px">指定升级下载</span>
<svg style="left:1125px;top:371px" width="72" height="46" viewBox="0 0 72 46"><path fill="#eef1f4" stroke="#dde" d="M14 43C5 43 1 37 1 31s5-11 11-11c2-11 11-18 22-18 10 0 19 6 22 16 9 0 15 6 15 13s-5 12-13 12Z"/><path fill="#0f86ea" d="M27 43V24H19L34 5l15 19h-8v19Z"/></svg>

<div class="card" style="top:457px;height:84px;overflow:hidden"></div>
<span class="t h" style="left:1009px;top:473px">预约服务</span>
<span class="t g" style="left:1009px;top:499px">服务面对面，承</span>
<span class="t g" style="left:1009px;top:516px">诺心连心</span>
<svg style="left:1113px;top:458px" width="86" height="82" viewBox="0 0 86 82"><rect x="36" width="50" height="82" fill="#efe9e2"/><path fill="#20212a" d="M0 0H42l14 36-10 8 2 38H2L18 38Z"/><path fill="#53545f" d="M14 12l24 22 12 8-10 12-24-16Z"/><path fill="#f1c4a0" d="M38 40c6-6 14-6 20-6l14 6-8 16-14 4-10-10Z"/><path fill="#222" d="M72 0h14v82h-8l-4-8Z" opacity=".2"/></svg>

<div class="card" style="top:566px;height:52px;border-bottom:0"></div>
<span class="t" style="left:1008px;top:582px;font-size:15px;color:#555">服务APP下载</span>
<span class="t g" style="left:1009px;top:608px;height:10px;overflow:hidden">您的掌上服务专</span>
<svg style="left:1129px;top:577px" width="63" height="41" viewBox="0 0 63 41"><g fill="none" stroke="#111" stroke-width="3"><rect x="2" y="2" width="13" height="13"/><rect x="48" y="2" width="13" height="13"/></g><rect x="6" y="6" width="5" height="5" fill="#111"/><rect x="52" y="6" width="5" height="5" fill="#111"/><path stroke="#111" stroke-width="3" stroke-dasharray="3 2" d="M19 4h26M19 10h26M19 16h26M2 22h60M2 28h22M40 28h22M2 34h20M42 34h20M2 40h60"/><rect x="24" y="24" width="16" height="16" rx="4" fill="#2f9bf0"/><path d="M28 29h8l-8 7h8" fill="none" stroke="#fff" stroke-width="1.800"/></svg>

<!-- floats -->
<div style="left:1167px;top:374px;width:33px;height:33px;background:#b9b9b9"></div>
<svg style="left:1175px;top:383px" width="17" height="15"><path d="M0 1h17M1 13l7.500-8L16 13" fill="none" stroke="#eee" stroke-width="1.500"/></svg>
<div class="side" style="top:415px">意见<br>反馈</div>
<div class="side" style="top:458px">关注<br>我们</div>
<div class="side" style="top:500px">Q Q<br>咨询</div>

<!-- scrollbars -->
<div style="left:1219px;top:145px;width:12px;height:473px;background:#f1f1f1"></div>
<div style="left:1220px;top:214px;width:10px;height:116px;background:#c1c1c1"></div>
<span class="t" style="left:1221px;top:148px;font-size:7px;color:#333">▲</span>
<span class="t" style="left:1221px;top:608px;font-size:7px;color:#555">▼</span>
<div style="left:167px;top:618px;width:1064px;height:12px;background:#eee"></div>
<div style="left:178px;top:619px;width:1029px;height:11px;background:#c6c6c6"></div>
<span class="t" style="left:170px;top:620px;font-size:7px;color:#bbb">◀</span>
<span class="t" style="left:1209px;top:620px;font-size:7px;color:#444">▶</span>
<div style="left:135px;top:612px;width:32px;height:18px;background:#f4f6f6"></div>
<span class="t" style="left:145px;top:611px;font-size:17px;color:#555;font-weight:700">+</span>

<!-- status bar -->
<div style="left:135px;top:630px;width:1096px;height:21px;background:#fff;border-top:2px solid #e8e8e8;box-sizing:border-box"></div>
<svg style="left:143px;top:635px" width="12" height="13" viewBox="0 0 12 13"><rect x="1" y="4" width="10" height="8" fill="none" stroke="#f5b08a"/><path d="M0 4h12M6 1v11" stroke="#f5b08a"/></svg>
<span class="t st" style="left:159px">今日优选</span>
<svg style="left:808px;top:634px" width="132" height="14" viewBox="0 0 132 14"><rect x=".5" y=".5" width="10" height="13" fill="none" stroke="#35c35d"/><path d="M4 4l4 3-4 3Z" fill="#35c35d"/><circle cx="60" cy="7" r="6" fill="none" stroke="#35c35d"/><path d="M58 4l4 3-4 3Z" fill="#35c35d"/><rect x="121" y="1" width="11" height="12" fill="none" stroke="#35c35d"/></svg>
<span class="t st" style="left:824px">快剪辑</span>
<span class="t st" style="left:879px">今日直播</span>
<svg style="left:928px;top:634px" width="12" height="14"><rect x=".5" y="1" width="10" height="12" fill="none" stroke="#35c35d"/><path d="M3 5h5M3 8h5" stroke="#35c35d"/></svg>
<span class="t st" style="left:944px">热点资讯</span>
<span class="t st" style="left:997px;font-size:12px;top:634px;color:#999">⟲</span>
<span class="t st" style="left:1026px;font-size:12px;top:634px;color:#999">✎</span>
<span class="t st" style="left:1053px;top:635px;color:#999">↓</span>
<span class="t st" style="left:1068px">下载</span>
<span class="t st" style="left:1099px;font-size:12px;top:634px;color:#999">e</span>
<svg style="left:1130px;top:635px" width="11" height="11" color="#aaa"><use href="#rs" width="11" height="11"/></svg>
<svg style="left:1158px;top:635px" width="12" height="11" viewBox="0 0 20 18"><path fill="none" stroke="#aaa" stroke-width="1.300" d="M2 6h3l5-4v14l-5-4H2ZM13 5c2 2 2 6 0 8M16 3c3 3 3 9 0 12"/></svg>
<svg style="left:1186px;top:635px" width="11" height="11" viewBox="0 0 14 14"><circle cx="6" cy="6" r="4.500" fill="none" stroke="#999" stroke-width="1.500"/><path d="M9.500 9.500l3 3" stroke="#999" stroke-width="1.500"/></svg>
<span class="t st" style="left:1202px">105%</span>

<!-- taskbar 3 -->
<div class="tb" style="left:135px;top:651px;width:1096px;height:32px"></div>
<div style="left:135px;top:651px;width:38px;height:32px;background:#000"></div>
<div style="left:173px;top:651px;width:276px;height:32px;background:#333"></div>
<svg style="left:147px;top:660px" width="14" height="14"><use href="#win" width="14" height="14"/></svg>
<div style="left:181px;top:659px;width:17px;height:17px;border:2px solid #ddd;border-radius:50%;box-sizing:border-box"></div>
<span class="t" style="left:202px;top:662px;font-size:11px;color:#999">在这里输入你要搜索的内容</span>
<svg style="left:428px;top:659px" width="11" height="17"><use href="#mic" width="11" height="17"/></svg>
<svg style="left:460px;top:660px;opacity:.7" width="17" height="14"><use href="#tv" width="17" height="14"/></svg>
<svg style="left:499px;top:657px" width="20" height="20"><use href="#pin" width="20" height="20"/></svg>
<svg style="left:541px;top:658px" width="19" height="19"><use href="#iew" width="19" height="19"/></svg>
<svg style="left:581px;top:658px" width="19" height="19"><use href="#spi" width="19" height="19"/></svg>
<svg style="left:622px;top:658px" width="18" height="18"><use href="#edge" width="18" height="18"/></svg>
<svg style="left:656px;top:657px" width="20" height="20"><use href="#ie" width="20" height="20"/></svg>
<svg style="left:691px;top:658px" width="18" height="18"><use href="#fold" width="18" height="18"/></svg>
<svg style="left:724px;top:657px" width="20" height="20"><use href="#g" width="20" height="20"/></svg>
<div style="left:752px;top:651px;width:33px;height:32px;background:#3c4345"></div>
<svg style="left:757px;top:657px" width="20" height="20"><use href="#ge" width="20" height="20"/></svg>
<svg style="left:792px;top:657px" width="19" height="19"><use href="#bl" width="19" height="19"/></svg>
<svg style="left:825px;top:657px" width="20" height="20"><use href="#no" width="20" height="20"/></svg>
<svg style="left:859px;top:657px" width="20" height="20"><use href="#cad" width="20" height="20"/></svg>
<div style="left:721px;top:681px;width:27px;height:2px;background:#76b9ed"></div><div style="left:754px;top:681px;width:30px;height:2px;background:#76b9ed"></div><div style="left:789px;top:681px;width:27px;height:2px;background:#76b9ed"></div><div style="left:823px;top:681px;width:27px;height:2px;background:#76b9ed"></div><div style="left:857px;top:681px;width:26px;height:2px;background:#76b9ed"></div>
<span class="t" style="left:896px;top:662px;font-size:10px;color:#bbb">链接</span>
<span class="t" style="left:940px;top:656px;font-size:10px;color:#ccc">15%</span>
<span class="t" style="left:931px;top:669px;font-size:10px;color:#ccc">CPU使用</span>
<svg style="left:985px;top:664px" width="11" height="7"><use href="#up" width="11" height="7"/></svg>
<svg style="left:1003px;top:661px" width="14" height="12"><use href="#bat" width="14" height="12"/></svg>
<svg style="left:1024px;top:661px" width="13" height="13"><use href="#wf" width="13" height="13"/></svg>
<svg style="left:1042px;top:661px" width="13" height="12"><use href="#vol" width="13" height="12"/></svg>
<svg style="left:1061px;top:661px" width="18" height="13"><use href="#kb" width="18" height="13"/></svg>
<span class="t" style="left:1088px;top:662px;font-size:10.500px;color:#eee">中</span>
<svg style="left:1109px;top:660px" width="14" height="14"><use href="#s" width="14" height="14"/></svg>
<span class="t" style="left:1147px;top:655px;font-size:10.500px;color:#ccc">21:15</span>
<span class="t" style="left:1135px;top:669px;font-size:10.500px;color:#ccc">2018/5/12</span>
<svg style="left:1198px;top:660px" width="15" height="15"><use href="#nf" width="15" height="15"/></svg>

<!-- taskbar 2 -->
<div class="tb" style="left:71px;top:687px;width:1224px;height:36px"></div>
<div style="left:71px;top:687px;width:43px;height:36px;background:#000"></div>
<div style="left:114px;top:687px;width:308px;height:36px;background:#333"></div>
<svg style="left:85px;top:698px" width="15" height="15"><use href="#win" width="15" height="15"/></svg>
<div style="left:122px;top:696px;width:19px;height:19px;border:2px solid #ddd;border-radius:50%;box-sizing:border-box"></div>
<span class="t" style="left:146px;top:699px;font-size:12.500px;color:#999">在这里输入你要搜索的内容</span>
<svg style="left:398px;top:696px" width="12" height="19"><use href="#mic" width="12" height="19"/></svg>
<svg style="left:434px;top:697px;opacity:.8" width="19" height="16"><use href="#tv" width="19" height="16"/></svg>
<svg style="left:478px;top:694px" width="22" height="22"><use href="#pin" width="22" height="22"/></svg>
<svg style="left:525px;top:695px" width="21" height="21"><use href="#iew" width="21" height="21"/></svg>
<svg style="left:569px;top:695px" width="21" height="21"><use href="#spi" width="21" height="21"/></svg>
<svg style="left:612px;top:695px" width="20" height="20"><use href="#edge" width="20" height="20"/></svg>
<svg style="left:645px;top:694px" width="22" height="22"><use href="#ie" width="22" height="22"/></svg>
<svg style="left:680px;top:695px" width="20" height="20"><use href="#fold" width="20" height="20"/></svg>
<svg style="left:713px;top:694px" width="22" height="22"><use href="#g" width="22" height="22"/></svg>
<svg style="left:747px;top:694px" width="22" height="22"><use href="#ge" width="22" height="22"/></svg>
<svg style="left:781px;top:694px" width="22" height="22"><use href="#bl" width="22" height="22"/></svg>
<svg style="left:815px;top:694px" width="22" height="22"><use href="#no" width="22" height="22"/></svg>
<svg style="left:849px;top:694px" width="22" height="22"><use href="#cad" width="22" height="22"/></svg>
<div style="left:877px;top:687px;width:33px;height:36px;background:#3c4345"></div>
<svg style="left:883px;top:694px" width="22" height="22"><use href="#kw" width="22" height="22"/></svg>
<div style="left:712px;top:721px;width:25px;height:2px;background:#76b9ed"></div><div style="left:746px;top:721px;width:25px;height:2px;background:#76b9ed"></div><div style="left:780px;top:721px;width:25px;height:2px;background:#76b9ed"></div><div style="left:814px;top:721px;width:25px;height:2px;background:#76b9ed"></div><div style="left:848px;top:721px;width:25px;height:2px;background:#76b9ed"></div><div style="left:877px;top:721px;width:33px;height:2px;background:#76b9ed"></div>
<span class="t" style="left:921px;top:699px;font-size:11px;color:#ddd">链接</span>
<span class="t" style="left:974px;top:692px;font-size:11px;color:#ddd">2%</span>
<span class="t" style="left:960px;top:707px;font-size:11.500px;color:#ddd">CPU使用</span>
<svg style="left:1021px;top:702px" width="12" height="8"><use href="#up" width="12" height="8"/></svg>
<svg style="left:1040px;top:698px" width="16" height="14"><use href="#bat" width="16" height="14"/></svg>
<svg style="left:1063px;top:698px" width="14" height="14"><use href="#wf" width="14" height="14"/></svg>
<svg style="left:1083px;top:698px" width="14" height="13"><use href="#vol" width="14" height="13"/></svg>
<svg style="left:1105px;top:698px" width="20" height="14"><use href="#kb" width="20" height="14"/></svg>
<span class="t" style="left:1135px;top:699px;font-size:11.500px;color:#eee">中</span>
<svg style="left:1158px;top:697px" width="15" height="16"><use href="#s" width="15" height="16"/></svg>
<span class="t" style="left:1200px;top:691px;font-size:11.500px;color:#ddd">21:20</span>
<span class="t" style="left:1188px;top:708px;font-size:11.500px;color:#ddd">2018/5/12</span>
<svg style="left:1257px;top:697px" width="16" height="16"><use href="#nf" width="16" height="16"/></svg>

<!-- taskbar 1 -->
<div class="tb" style="left:0;top:728px;width:1366px;height:40px"></div>
<div style="left:0;top:728px;width:48px;height:40px;background:#000"></div>
<div style="left:48px;top:728px;width:344px;height:40px;background:#333"></div>
<svg style="left:16px;top:740px" width="16" height="16"><use href="#win" width="16" height="16"/></svg>
<div style="left:57px;top:737px;width:22px;height:22px;border:2.500px solid #e6e6e6;border-radius:50%;box-sizing:border-box"></div>
<span class="t" style="left:84px;top:742px;font-size:14px;color:#a0a0a0">在这里输入你要搜索的内容</span>
<svg style="left:365px;top:737px" width="13" height="22"><use href="#mic" width="13" height="22"/></svg>
<svg style="left:406px;top:739px" width="21" height="18"><use href="#tv" width="21" height="18"/></svg>
<svg style="left:454px;top:736px" width="25" height="25"><use href="#pin" width="25" height="25"/></svg>
<svg style="left:506px;top:736px" width="24" height="24"><use href="#iew" width="24" height="24"/></svg>
<svg style="left:555px;top:736px" width="24" height="24"><use href="#spi" width="24" height="24"/></svg>
<svg style="left:604px;top:736px" width="23" height="23"><use href="#edge" width="23" height="23"/></svg>
<svg style="left:641px;top:735px" width="25" height="25"><use href="#ie" width="25" height="25"/></svg>
<svg style="left:679px;top:736px" width="23" height="23"><use href="#fold" width="23" height="23"/></svg>
<svg style="left:717px;top:735px" width="25" height="25"><use href="#g" width="25" height="25"/></svg>
<svg style="left:755px;top:735px" width="25" height="25"><use href="#ge" width="25" height="25"/></svg>
<svg style="left:793px;top:735px" width="25" height="25"><use href="#bl" width="25" height="25"/></svg>
<svg style="left:831px;top:735px" width="25" height="25"><use href="#no" width="25" height="25"/></svg>
<svg style="left:869px;top:735px" width="25" height="25"><use href="#cad" width="25" height="25"/></svg>
<div style="left:900px;top:728px;width:36px;height:40px;background:#3c4345"></div>
<svg style="left:906px;top:735px" width="25" height="25"><use href="#kw" width="25" height="25"/></svg>
<div style="left:715px;top:766px;width:29px;height:2px;background:#76b9ed"></div><div style="left:753px;top:766px;width:29px;height:2px;background:#76b9ed"></div><div style="left:791px;top:766px;width:29px;height:2px;background:#76b9ed"></div><div style="left:829px;top:766px;width:29px;height:2px;background:#76b9ed"></div><div style="left:867px;top:766px;width:29px;height:2px;background:#76b9ed"></div><div style="left:900px;top:766px;width:36px;height:2px;background:#76b9ed"></div>
<span class="t" style="left:949px;top:742px;font-size:12px;color:#eee">链接</span>
<span class="t" style="left:1007px;top:733px;font-size:12px;color:#eee">7%</span>
<span class="t" style="left:992px;top:750px;font-size:12px;color:#eee">CPU使用</span>
<svg style="left:1059px;top:744px" width="13" height="9"><use href="#up" width="13" height="9"/></svg>
<svg style="left:1081px;top:739px" width="18" height="16"><use href="#bat" width="18" height="16"/></svg>
<svg style="left:1107px;top:740px" width="16" height="16"><use href="#wf" width="16" height="16"/></svg>
<svg style="left:1130px;top:740px" width="16" height="15"><use href="#vol" width="16" height="15"/></svg>
<svg style="left:1154px;top:740px" width="24" height="15"><use href="#kb" width="24" height="15"/></svg>
<span class="t" style="left:1187px;top:741px;font-size:13px;color:#fff">中</span>
<svg style="left:1213px;top:739px" width="17" height="17"><use href="#s" width="17" height="17"/></svg>
<span class="t" style="left:1261px;top:732px;font-size:12.500px;color:#eee">21:22</span>
<span class="t" style="left:1247px;top:751px;font-size:13px;color:#eee">2018/5/12</span>
<svg style="left:1325px;top:739px" width="18" height="18"><use href="#nf" width="18" height="18"/></svg>
</body></html>
